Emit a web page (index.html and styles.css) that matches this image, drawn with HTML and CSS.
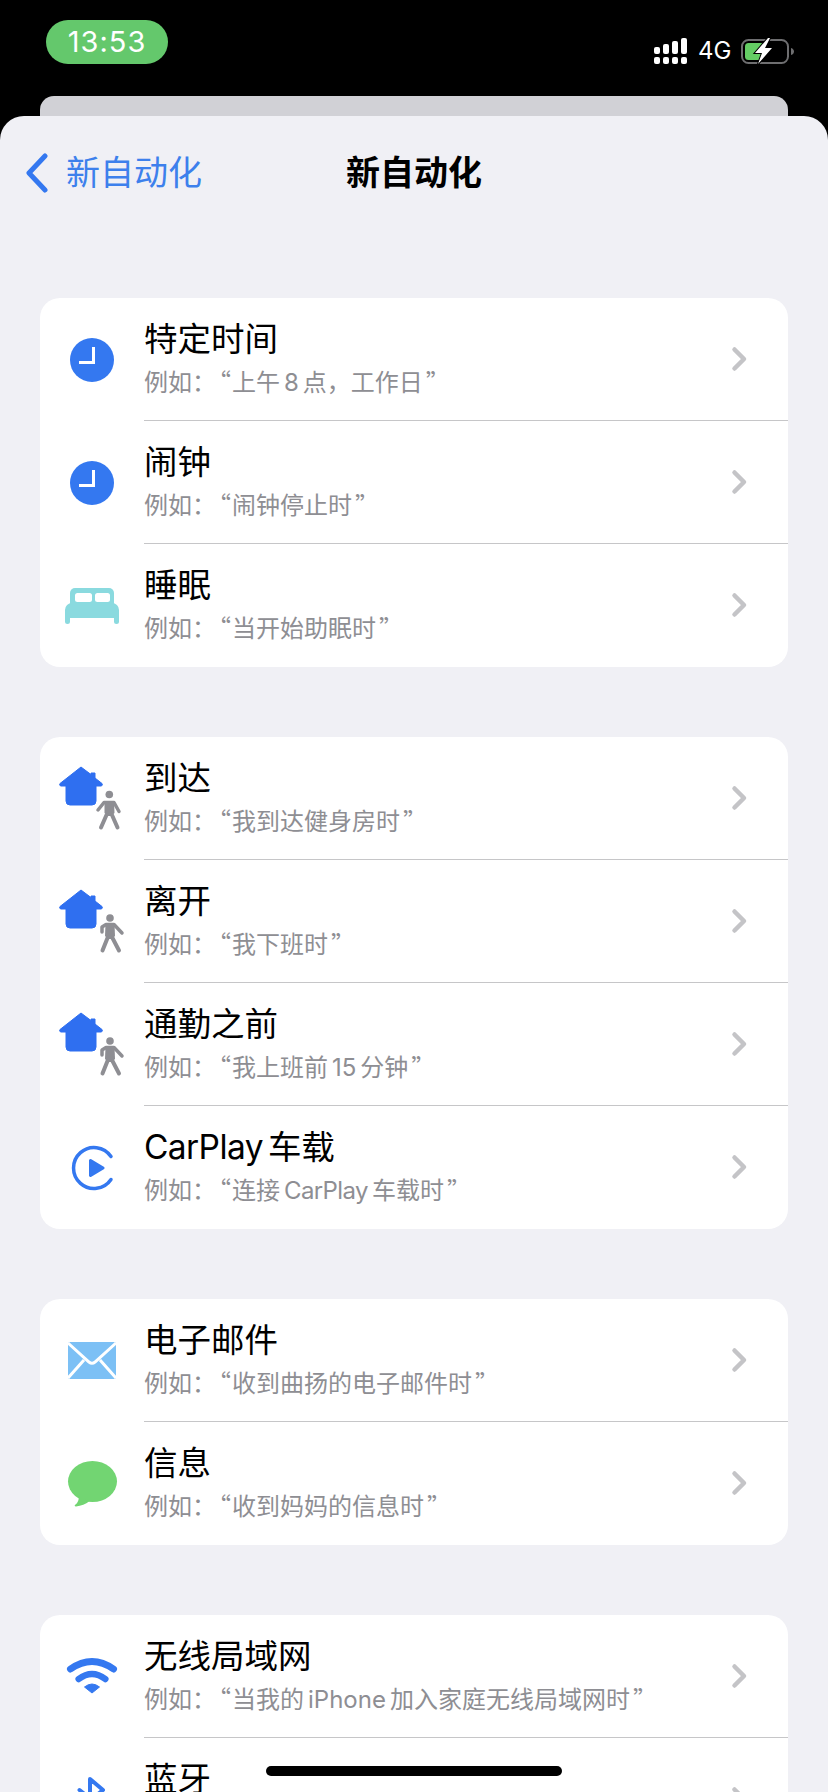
FILE: index.html
```html
<!DOCTYPE html>
<html lang="zh-CN">
<head>
<meta charset="utf-8">
<title>新自动化</title>
<link rel="stylesheet" href="styles.css">
</head>
<body>
<svg class="defs" width="0" height="0" aria-hidden="true">
  <defs>
    <symbol id="clock" viewBox="0 0 104 122">
      <circle cx="52" cy="62" r="22" fill="#3478f0"/>
      <path d="M53.500 49v15.500H39" fill="none" stroke="#fff" stroke-width="3"/>
    </symbol>
    <symbol id="bed" viewBox="0 0 104 122">
      <path d="M30 60V49a5 5 0 0 1 5-5h34a5 5 0 0 1 5 5v11z" fill="#8adadf"/>
      <rect x="35" y="49" width="17" height="9" rx="2.500" fill="#fff"/>
      <rect x="55" y="49" width="15" height="9" rx="2.500" fill="#fff"/>
      <path d="M25 66a7 7 0 0 1 7-7h40a7 7 0 0 1 7 7v11.500a2.500 2.500 0 0 1-5 0V74H30v3.500a2.500 2.500 0 0 1-5 0z" fill="#8adadf"/>
    </symbol>
    <symbol id="house" viewBox="0 0 104 122">
      <path d="M41 30 51 37.500V36h4v5l7 5.500a1.500 1.500 0 0 1-1 2.500h-5v15a4 4 0 0 1-4 4H30a4 4 0 0 1-4-4V49h-5a1.500 1.500 0 0 1-1-2.500z" fill="#2f6ff0" stroke="#2f6ff0" stroke-linejoin="round"/>
    </symbol>
    <symbol id="walk-a" viewBox="0 0 104 122">
      <circle cx="69.300" cy="57.500" r="3.800" fill="#8e8e93"/>
      <path d="M58 73l6-7.500h10l5 9" fill="none" stroke="#8e8e93" stroke-width="3.500" stroke-linecap="round" stroke-linejoin="round"/>
      <path d="M64.500 64h9.500l.500 12-3 3h-4l-3-3z" fill="#8e8e93"/>
      <path d="M66.500 78 61 90.500M72 78 77.500 90.500" fill="none" stroke="#8e8e93" stroke-width="4" stroke-linecap="round"/>
    </symbol>
    <symbol id="walk-b" viewBox="0 0 104 122">
      <circle cx="70" cy="58" r="3.800" fill="#8e8e93"/>
      <path d="M62 72v-5l4-2.500h8l8 8.500" fill="none" stroke="#8e8e93" stroke-width="3.500" stroke-linecap="round" stroke-linejoin="round"/>
      <path d="M65.500 64h9l.500 12-3 3h-4l-3-3z" fill="#8e8e93"/>
      <path d="M67.500 78 62.500 90.500M72.500 78 79 90.500" fill="none" stroke="#8e8e93" stroke-width="4" stroke-linecap="round"/>
    </symbol>
    <symbol id="carplay" viewBox="0 0 104 122">
      <path d="M71 50.500A20.500 20.500 0 1 0 71 73.500" fill="none" stroke="#3478f0" stroke-width="3.500" stroke-linecap="round"/>
      <path d="M49 54.500a1.500 1.500 0 0 1 2.300-1.300l12.500 7.500a1.500 1.500 0 0 1 0 2.600l-12.500 7.500a1.500 1.500 0 0 1-2.300-1.300z" fill="#3478f0"/>
    </symbol>
    <symbol id="mail" viewBox="0 0 104 122">
      <rect x="28" y="43" width="48" height="37" rx="2" fill="#7cc0f5"/>
      <path d="M28 44 49 63q3 2.500 6 0L76 44M28 79 44 61M76 79 60 61" fill="none" stroke="#fff" stroke-width="3"/>
    </symbol>
    <symbol id="bubble" viewBox="0 0 104 122">
      <ellipse cx="52.500" cy="59.500" rx="24.500" ry="20.500" fill="#72d572"/>
      <path d="M39 74c0 3-1 7-4 9-.8.800 0 1.500 1 1.400 5-.6 10-2.400 13-5z" fill="#72d572"/>
    </symbol>
    <symbol id="wifi" viewBox="0 0 104 122">
      <path d="M30.500 54Q52 39 73.500 54" fill="none" stroke="#3478f0" stroke-width="7" stroke-linecap="round"/>
      <path d="M38.700 64Q52 54 65.300 64" fill="none" stroke="#3478f0" stroke-width="6.500" stroke-linecap="round"/>
      <path d="M52 78 44.500 72Q52 66 59.500 72z" fill="#3478f0" stroke="#3478f0" stroke-linejoin="round"/>
    </symbol>
    <symbol id="bluetooth" viewBox="0 0 104 122">
      <path d="M39.500 52 63 71 50 83V41L63 52 39.500 71" fill="none" stroke="#3478f0" stroke-width="4" stroke-linejoin="round" stroke-linecap="round"/>
    </symbol>
    <symbol id="chevron" viewBox="0 0 20 30">
      <path d="M5.500 5.500 15 15 5.500 24.500" fill="none" stroke="#c4c4c7" stroke-width="4.500" stroke-linecap="round" stroke-linejoin="round"/>
    </symbol>
  </defs>
</svg>

<div class="screen">
  <header class="status">
    <div class="pill">13:53</div>
    <div class="status-right">
      <svg class="signal" viewBox="0 0 33 26" width="33" height="26" aria-hidden="true">
        <g fill="#fff">
          <rect x="0" y="9" width="6" height="7" rx="2"/><rect x="9" y="6" width="6" height="10" rx="2"/><rect x="18" y="3" width="6" height="13" rx="2"/><rect x="27" y="0" width="6" height="16" rx="2"/>
          <rect x="0" y="19" width="6" height="7" rx="2"/><rect x="9" y="19" width="6" height="7" rx="2"/><rect x="18" y="19" width="6" height="7" rx="2"/><rect x="27" y="19" width="6" height="7" rx="2"/>
        </g>
      </svg>
      <span class="net">4G</span>
      <svg class="battery" viewBox="0 0 53 28" width="53" height="28" aria-hidden="true">
        <rect x="1" y="3" width="46" height="23" rx="6.500" fill="none" stroke="#6e6e70" stroke-width="2"/>
        <rect x="4" y="6" width="19" height="17" rx="3.500" fill="#64cd64"/>
        <path d="M50 11c2 .5 3 2 3 3.500s-1 3-3 3.500z" fill="#6e6e70"/>
        <path d="M27 1 14 16h7l-4 11 14-16h-7l5-10z" fill="#fff" stroke="#000" stroke-width="2" paint-order="stroke"/>
      </svg>
    </div>
  </header>
  <div class="back-card"></div>
  <main class="sheet">
    <nav class="nav">
      <a class="back">
        <svg class="back-chevron" viewBox="0 0 26 40" width="26" height="40" aria-hidden="true"><path d="M21 3 5 20 21 37" fill="none" stroke="#3478f0" stroke-width="5" stroke-linecap="round" stroke-linejoin="round"/></svg>
        <span>新自动化</span>
      </a>
      <h1 class="nav-title">新自动化</h1>
    </nav>

    <section class="card">
      <div class="row"><svg class="icon"><use href="#clock"/></svg><div class="text"><div class="title">特定时间</div><div class="sub">例如：<span class="qo">“</span>上午<span class="lat">8</span>点，工作日<span class="qc">”</span></div></div><svg class="chev"><use href="#chevron"/></svg></div>
      <div class="row"><svg class="icon"><use href="#clock"/></svg><div class="text"><div class="title">闹钟</div><div class="sub">例如：<span class="qo">“</span>闹钟停止时<span class="qc">”</span></div></div><svg class="chev"><use href="#chevron"/></svg></div>
      <div class="row"><svg class="icon"><use href="#bed"/></svg><div class="text"><div class="title">睡眠</div><div class="sub">例如：<span class="qo">“</span>当开始助眠时<span class="qc">”</span></div></div><svg class="chev"><use href="#chevron"/></svg></div>
    </section>

    <section class="card">
      <div class="row"><svg class="icon"><use href="#house"/><use href="#walk-a"/></svg><div class="text"><div class="title">到达</div><div class="sub">例如：<span class="qo">“</span>我到达健身房时<span class="qc">”</span></div></div><svg class="chev"><use href="#chevron"/></svg></div>
      <div class="row"><svg class="icon"><use href="#house"/><use href="#walk-b"/></svg><div class="text"><div class="title">离开</div><div class="sub">例如：<span class="qo">“</span>我下班时<span class="qc">”</span></div></div><svg class="chev"><use href="#chevron"/></svg></div>
      <div class="row"><svg class="icon"><use href="#house"/><use href="#walk-b"/></svg><div class="text"><div class="title">通勤之前</div><div class="sub">例如：<span class="qo">“</span>我上班前<span class="lat">15</span>分钟<span class="qc">”</span></div></div><svg class="chev"><use href="#chevron"/></svg></div>
      <div class="row"><svg class="icon"><use href="#carplay"/></svg><div class="text"><div class="title"><span class="lat-title">CarPlay</span>车载</div><div class="sub">例如：<span class="qo">“</span>连接<span class="lat tight">CarPlay</span>车载时<span class="qc">”</span></div></div><svg class="chev"><use href="#chevron"/></svg></div>
    </section>

    <section class="card">
      <div class="row"><svg class="icon"><use href="#mail"/></svg><div class="text"><div class="title">电子邮件</div><div class="sub">例如：<span class="qo">“</span>收到曲扬的电子邮件时<span class="qc">”</span></div></div><svg class="chev"><use href="#chevron"/></svg></div>
      <div class="row"><svg class="icon"><use href="#bubble"/></svg><div class="text"><div class="title">信息</div><div class="sub">例如：<span class="qo">“</span>收到妈妈的信息时<span class="qc">”</span></div></div><svg class="chev"><use href="#chevron"/></svg></div>
    </section>

    <section class="card">
      <div class="row"><svg class="icon"><use href="#wifi"/></svg><div class="text"><div class="title">无线局域网</div><div class="sub">例如：<span class="qo">“</span>当我的<span class="lat">iPhone</span>加入家庭无线局域网时<span class="qc">”</span></div></div><svg class="chev"><use href="#chevron"/></svg></div>
      <div class="row"><svg class="icon"><use href="#bluetooth"/></svg><div class="text"><div class="title">蓝牙</div><div class="sub">例如：<span class="qo">“</span>连接到蓝牙设备时<span class="qc">”</span></div></div><svg class="chev"><use href="#chevron"/></svg></div>
    </section>
  </main>
  <div class="home-indicator"></div>
</div>
</body>
</html>
```

FILE: styles.css
```css
* { box-sizing: border-box; }
html, body { margin: 0; background: #000; }
body { font-family: Inter, "Noto Sans CJK SC", sans-serif; }
.defs { position: absolute; }

.screen { position: relative; width: 828px; height: 1792px; overflow: hidden; background: #000; display: flex; flex-direction: column; }

.status { height: 96px; flex: none; display: flex; justify-content: space-between; align-items: flex-start; padding: 20px 34px 0 46px; }
.pill { width: 122px; height: 44px; border-radius: 22px; background: #64c86c; color: #fff; font-size: 29px; line-height: 44px; text-align: center; letter-spacing: 1px; }
.status-right { display: flex; align-items: center; height: 28px; margin-top: 17px; }
.signal { flex: none; }
.net { color: #fff; font-size: 24px; line-height: 28px; margin-left: 11px; width: 32px; }
.battery { flex: none; margin-left: 11px; }

.back-card { height: 20px; margin: 0 40px; flex: none; background: #d1d1d6; border-radius: 14px 14px 0 0; }

.sheet { flex: 1; min-height: 0; background: #f0f0f5; border-radius: 24px 24px 0 0; padding: 0 40px; }

.nav { position: relative; height: 182px; margin: 0 -40px; display: flex; justify-content: center; }
.back { position: absolute; left: 24px; top: 36px; height: 42px; display: flex; align-items: center; gap: 16px; color: #3d80ec; font-size: 34px; line-height: 42px; }
.nav-title { margin: 36px 0 0; font-size: 34px; line-height: 42px; font-weight: 700; color: #000; }

.card { background: #fff; border-radius: 20px; margin-bottom: 70px; overflow: hidden; }
.row { position: relative; height: 123px; display: flex; align-items: flex-start; }
.row + .row::before { content: ""; position: absolute; left: 104px; right: 0; top: -1px; height: 1px; background: #c6c6c8; }
.icon { width: 104px; height: 122px; flex: none; }
.text { flex: 1; min-width: 0; padding-top: 19px; }
.title { font-size: 33.5px; line-height: 44px; color: #000; }
.sub { font-size: 24px; line-height: 34px; color: #8e8e93; margin-top: 5px; white-space: nowrap; }
.qo, .qc { font-family: "Noto Sans CJK SC", sans-serif; line-height: 0; }
.qo { margin: 0 1px 0 3px; }
.qc { margin-left: 3px; }
.lat { margin: 0 4px; }
.tight { letter-spacing: -.6px; }
.lat-title { margin-right: 5px; letter-spacing: -.6px; }
.chev { width: 20px; height: 30px; flex: none; margin: 46px 39px 0 0; }

.home-indicator { position: absolute; left: 266px; top: 1766px; width: 296px; height: 10px; border-radius: 5px; background: #000; }
```
